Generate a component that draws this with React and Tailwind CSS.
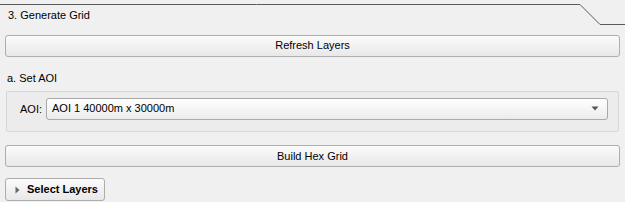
import React from "react";

const font = { fontFamily: '"Liberation Sans", Arial, sans-serif' };

// Windows-style push button
const Button = ({ children, className = "" }) => (
  <button
    type="button"
    className={`h-[22px] border border-[#adadad] rounded-[3px] bg-gradient-to-b from-[#fbfbfb] to-[#e8e8e8] text-[11px] text-black leading-none ${className}`}
  >
    {children}
  </button>
);

const App = () => {
  return (
    <div
      className="w-[625px] h-[202px] bg-[#f0f0f0] text-black overflow-hidden"
      style={font}
    >
      {/* Section header with tab line */}
      <div className="relative h-[28px]">
        <svg className="absolute inset-0" width="625" height="28">
          <path
            d="M0 4.5 H580 L600 24.5 H625"
            fill="none"
            stroke="#5a5a5a"
            strokeWidth="1"
          />
        </svg>
        <div className="relative pl-[8px] pt-[9px] text-[11px] leading-[13px]">
          3. Generate Grid
        </div>
      </div>

      <div className="px-[5px] mt-[4px]">
        <Button className="w-[615px]">Refresh Layers</Button>
      </div>

      {/* a. Set AOI */}
      <div className="pl-[7px] mt-[15px] text-[11px] leading-[13px]">
        a. Set AOI
      </div>
      <div className="ml-[6px] mt-[6px] w-[613px] h-[41px] border border-[#d6d6d6] rounded-[2px] bg-[#ececec] flex items-start pt-[6px] pl-[13px]">
        <span className="text-[11px] leading-[22px] w-[26px]">AOI:</span>
        <div className="w-[562px] h-[22px] border border-[#a9a9a9] rounded-[3px] bg-gradient-to-b from-white to-[#ececec] flex items-center justify-between pl-[5px] pr-[8px] text-[11px]">
          <span>AOI 1 40000m x 30000m</span>
          <svg width="8" height="5" viewBox="0 0 8 5">
            <path d="M0.5 0.5 H7.5 L4 4.5 Z" fill="#555" />
          </svg>
        </div>
      </div>

      <div className="px-[5px] mt-[11px]">
        <Button className="w-[615px]">Build Hex Grid</Button>
      </div>

      <div className="px-[5px] mt-[11px]">
        <Button className="w-[100px] h-[23px] flex items-center pl-[9px] font-bold">
          <svg width="5" height="8" viewBox="0 0 5 8" className="mr-[7px]">
            <path d="M0.5 0.5 L4.5 4 L0.5 7.5 Z" fill="#666" />
          </svg>
          Select Layers
        </Button>
      </div>
    </div>
  );
};

export default App;
